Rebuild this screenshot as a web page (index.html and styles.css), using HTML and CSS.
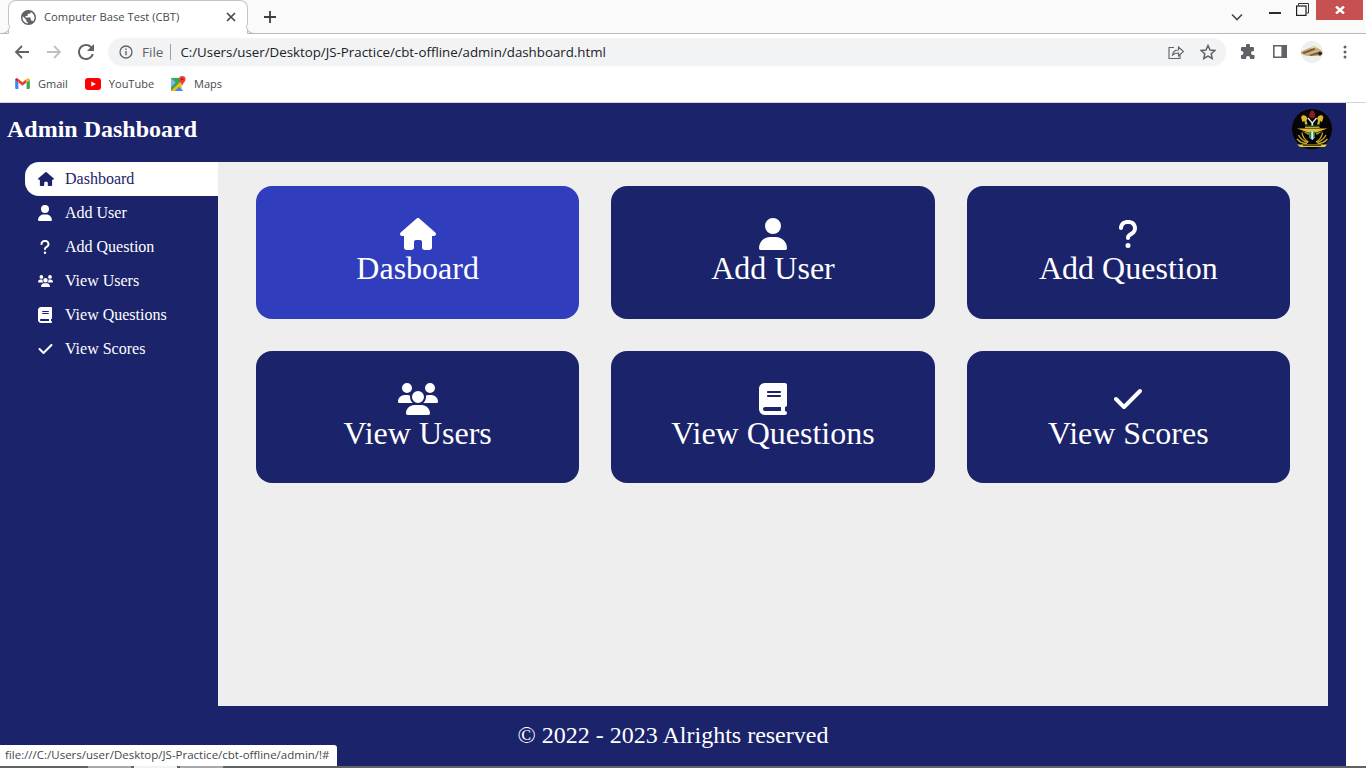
FILE: index.html
```html
<!DOCTYPE html>
<html lang="en">
<head>
<meta charset="utf-8">
<title>Computer Base Test (CBT)</title>
<link rel="stylesheet" href="styles.css">
</head>
<body>
<svg class="defs" aria-hidden="true">
  <symbol id="i-house" viewBox="0 0 576 512"><path d="M575.8 255.5c0 18-15 32.1-32 32.1h-32l.7 160.2c0 2.7-.2 5.4-.5 8.1V472c0 22.1-17.9 40-40 40H456c-1.1 0-2.2 0-3.3-.1c-1.4 .1-2.8 .1-4.2 .1H416 392c-22.1 0-40-17.9-40-40V448 384c0-17.7-14.3-32-32-32H256c-17.7 0-32 14.3-32 32v64 24c0 22.1-17.9 40-40 40H160 128.1c-1.5 0-3-.1-4.5-.2c-1.2 .1-2.4 .2-3.6 .2H104c-22.1 0-40-17.9-40-40V360c0-.9 0-1.9 .1-2.8V287.6H32c-18 0-32-14-32-32.1c0-9 3-17 10-24L266.4 8c7-7 15-8 22-8s15 2 21 7L564.8 231.5c8 7 12 15 11 24z"/></symbol>
  <symbol id="i-user" viewBox="0 0 448 512"><path d="M224 256A128 128 0 1 0 224 0a128 128 0 1 0 0 256zm-45.7 48C79.8 304 0 383.8 0 482.3C0 498.7 13.3 512 29.7 512H418.3c16.4 0 29.7-13.3 29.7-29.7C448 383.8 368.2 304 269.7 304H178.3z"/></symbol>
  <symbol id="i-question" viewBox="0 0 320 512"><path d="M80 160c0-35.3 28.7-64 64-64h32c35.3 0 64 28.7 64 64v3.6c0 21.8-11.1 42.1-29.4 53.8l-42.2 27.1c-25.2 16.2-40.4 44.1-40.4 74V320c0 17.7 14.3 32 32 32s32-14.3 32-32v-1.4c0-8.2 4.2-15.8 11-20.2l42.2-27.1c36.6-23.6 58.8-64.1 58.8-107.7V160c0-70.7-57.3-128-128-128H144C73.3 32 16 89.3 16 160c0 17.7 14.3 32 32 32s32-14.3 32-32zm80 320a40 40 0 1 0 0-80 40 40 0 1 0 0 80z"/></symbol>
  <symbol id="i-users" viewBox="0 0 640 512"><path d="M144 0a80 80 0 1 1 0 160A80 80 0 1 1 144 0zM512 0a80 80 0 1 1 0 160A80 80 0 1 1 512 0zM0 298.7C0 239.8 47.8 192 106.7 192h42.7c15.9 0 31 3.5 44.6 9.7c-1.3 7.2-1.9 14.7-1.9 22.3c0 38.2 16.8 72.5 43.3 96c-.2 0-.4 0-.7 0H21.3C9.6 320 0 310.4 0 298.7zM405.3 320c-.2 0-.4 0-.7 0c26.6-23.5 43.3-57.8 43.3-96c0-7.6-.7-15-1.9-22.3c13.6-6.3 28.7-9.7 44.6-9.7h42.7C592.2 192 640 239.8 640 298.7c0 11.8-9.6 21.3-21.3 21.3H405.3zM224 224a96 96 0 1 1 192 0 96 96 0 1 1 -192 0zM128 485.3C128 411.7 187.7 352 261.3 352H378.7C452.3 352 512 411.7 512 485.3c0 14.7-11.9 26.7-26.7 26.7H154.7c-14.7 0-26.7-11.9-26.7-26.7z"/></symbol>
  <symbol id="i-book" viewBox="0 0 448 512"><path d="M96 0C43 0 0 43 0 96V416c0 53 43 96 96 96H384h32c17.7 0 32-14.3 32-32s-14.3-32-32-32V384c17.7 0 32-14.3 32-32V32c0-17.7-14.3-32-32-32H384 96zm0 384H352v64H96c-17.7 0-32-14.3-32-32s14.3-32 32-32zm32-240c0-8.8 7.2-16 16-16H336c8.8 0 16 7.2 16 16s-7.2 16-16 16H144c-8.8 0-16-7.2-16-16zm16 48H336c8.8 0 16 7.2 16 16s-7.2 16-16 16H144c-8.8 0-16-7.2-16-16s7.2-16 16-16z"/></symbol>
  <symbol id="i-check" viewBox="0 0 448 512"><path d="M438.6 105.4c12.5 12.5 12.5 32.8 0 45.3l-256 256c-12.5 12.5-32.8 12.5-45.3 0l-128-128c-12.5-12.5-12.5-32.8 0-45.3s32.8-12.5 45.3 0L160 338.7 393.4 105.4c12.5-12.5 32.8-12.5 45.3 0z"/></symbol>
</svg>

<div class="chrome">
  <div class="tabstrip">
    <div class="tab">
      <svg class="tab-globe" viewBox="2 2 20 20"><path fill="#5f6368" d="M12 2C6.48 2 2 6.48 2 12s4.48 10 10 10 10-4.48 10-10S17.52 2 12 2zm-1 17.93c-3.95-.49-7-3.85-7-7.93 0-.62.08-1.21.21-1.79L9 15v1c0 1.1.9 2 2 2v1.93zm6.9-2.54c-.26-.81-1-1.39-1.9-1.39h-1v-3c0-.55-.45-1-1-1H8v-2h2c.55 0 1-.45 1-1V7h2c1.1 0 2-.9 2-2v-.41c2.93 1.19 5 4.06 5 7.41 0 2.08-.8 3.97-2.1 5.39z"/></svg>
      <span class="tab-title">Computer Base Test (CBT)</span>
      <svg class="tab-close" viewBox="0 0 10 10"><path d="M1 1l8 8M9 1l-8 8" stroke="#45494d" stroke-width="1.7"/></svg>
    </div>
    <svg class="new-tab" viewBox="0 0 12 12"><path d="M6 0v12M0 6h12" stroke="#3c4043" stroke-width="1.8"/></svg>
    <div class="win-controls">
      <svg class="tab-search" viewBox="0 0 12 8"><path d="M1 1.5l5 5 5-5" fill="none" stroke="#45494d" stroke-width="1.6"/></svg>
      <span class="win-min"></span>
      <svg class="win-max" viewBox="0 0 13 13"><path d="M2.5 2.5V.5h10V10H10.5" fill="none" stroke="#333" stroke-width="1"/><rect x=".6" y="3" width="9.4" height="9.4" fill="#fafafa" stroke="#1f1f1f" stroke-width="1.2"/></svg>
      <div class="win-close"><svg viewBox="0 0 10 8"><path d="M1 .5l8 7M9 .5l-8 7" stroke="#fff" stroke-width="2.4"/></svg></div>
    </div>
  </div>

  <div class="toolbar">
    <svg class="nav-ic" viewBox="0 0 16 16"><path d="M15 8H2.5M8 2L2 8l6 6" fill="none" stroke="#5f6368" stroke-width="1.8"/></svg>
    <svg class="nav-ic" viewBox="0 0 16 16"><path d="M1 8h12.5M8 2l6 6-6 6" fill="none" stroke="#bdc1c6" stroke-width="1.8"/></svg>
    <svg class="nav-ic" viewBox="4 4 16 16"><path fill="#5f6368" d="M17.65 6.35A7.958 7.958 0 0 0 12 4c-4.42 0-7.99 3.58-7.99 8s3.57 8 7.99 8c3.73 0 6.84-2.55 7.73-6h-2.08A5.99 5.99 0 0 1 12 18c-3.31 0-6-2.69-6-6s2.69-6 6-6c1.66 0 3.14.69 4.22 1.78L13 11h7V4l-2.35 2.35z"/></svg>
    <div class="omnibox">
      <svg class="info-ic" viewBox="0 0 14 14"><circle cx="7" cy="7" r="6" fill="none" stroke="#5f6368" stroke-width="1.3"/><path d="M7 6v4.2M7 3.5v1.500" stroke="#5f6368" stroke-width="1.4"/></svg>
      <span class="scheme">File</span>
      <span class="omni-sep"></span>
      <span class="url">C:/Users/user/Desktop/JS-Practice/cbt-offline/admin/dashboard.html</span>
      <svg class="share-ic" viewBox="0 0 16 16"><path d="M6 3.5H1v11h11V10" fill="none" stroke="#5f6368" stroke-width="1.1"/><path d="M4.5 11C5 7.5 7.5 6 10.5 6V3l5 4.5-5 4.500V9C8 9 6 9.500 4.500 11z" fill="#f1f3f4" stroke="#5f6368" stroke-width="1.1"/></svg>
      <svg class="star-ic" viewBox="0 0 16 16"><path d="M8 1.5l2 4.5 4.800.5-3.600 3.200 1 4.800L8 12.100l-4.200 2.400 1-4.800L1.200 6.500 6 6z" fill="none" stroke="#5f6368" stroke-width="1.5"/></svg>
    </div>
    <svg class="ext-ic" viewBox="0 0 16 16"><path d="M6 1.500a2 2 0 0 1 4 0V3h3a1 1 0 0 1 1 1v3h-1a2 2 0 0 0 0 4h1.500v3a1 1 0 0 1-1 1H10v-1a2 2 0 0 0-4 0v1H2a1 1 0 0 1-1-1v-3h.5a2 2 0 0 0 0-4H1V4a1 1 0 0 1 1-1h4z" fill="#5f6368"/></svg>
    <svg class="panel-ic" viewBox="0 0 14 13"><path fill-rule="evenodd" d="M0 0h14v13H0zM1.600 1.600v9.800h6.800V1.600z" fill="#5f6368"/></svg>
    <svg class="avatar" viewBox="0 0 22 22"><circle cx="11" cy="11" r="11" fill="#edf0ee"/><path d="M0 10.500L13 5l7 4 2 3.500-3 2.500H6L0 13z" fill="#cdb07a"/><path d="M1 11.500L13 7l1.500 1.500L3 13zM8 14l9-3 1 2-8 2z" fill="#6f5b3e"/><path d="M10 6.500l4-1.500 1 1-4 1.500z" fill="#eadcb8"/><circle cx="19" cy="12.500" r="2" fill="#26282b"/></svg>
    <svg class="menu-ic" viewBox="0 0 4 14"><circle cx="2" cy="2" r="1.500" fill="#5f6368"/><circle cx="2" cy="7" r="1.500" fill="#5f6368"/><circle cx="2" cy="12" r="1.500" fill="#5f6368"/></svg>
  </div>

  <div class="bookmarks">
    <a class="bm" href="#"><svg class="bm-ic bm-gmail" viewBox="0 0 16 12"><path d="M0 2v9a1 1 0 0 0 1 1h2.500V5z" fill="#4285f4"/><path d="M16 2v9a1 1 0 0 1-1 1h-2.500V5z" fill="#34a853"/><path d="M3.500 5V1L8 4.500 12.500 1v4L8 8.500z" fill="#ea4335"/><path d="M0 2c0-1.700 2-2.500 3.500-1v4z" fill="#c5221f"/><path d="M16 2c0-1.700-2-2.500-3.500-1v4z" fill="#fbbc04"/></svg>Gmail</a>
    <a class="bm" href="#"><svg class="bm-ic bm-yt" viewBox="0 0 16 12"><rect width="16" height="12" rx="3" fill="#f00"/><path d="M6.300 3.400v5.200L10.800 6z" fill="#fff"/></svg>YouTube</a>
    <a class="bm" href="#"><svg class="bm-ic bm-maps" viewBox="0 0 16 16"><path d="M0 2h11v14H0z" fill="#34a853"/><path d="M0 16L11 5v11z" fill="#fbbc04"/><path d="M4 16l4.500-4.500L13 16z" fill="#4285f4"/><path d="M0 2l5 5-5 5z" fill="#8ab4f8"/><path d="M12 0a3.500 3.500 0 0 1 3.500 3.500C15.500 6 13 7.500 12 10 11 7.500 8.500 6 8.500 3.500A3.500 3.500 0 0 1 12 0z" fill="#ea4335"/><circle cx="12" cy="3.500" r="1.200" fill="#a50e0e"/></svg>Maps</a>
  </div>
</div>

<div class="app">
  <div class="page">
    <header class="topbar">
      <h1 class="brand">Admin Dashboard</h1>
      <svg class="crest" viewBox="0 0 40 40">
        <circle cx="20" cy="20" r="20" fill="#050505"/>
        <path d="M17.500 8c-.8-2.500.5-6 2.700-7 2.300 1 3.500 4.500 2.600 7l-2.600 1.500z" fill="#8f1d1d"/>
        <path d="M9 8l2-2 3 1 1.500 2.500-1 2 1 4H13l-.5-3.500-2 1z" fill="#d8b62e"/>
        <path d="M31.500 8l-2-2-3 1-1.500 2.500 1 2-1 4h2.500l.5-3.500 2 1z" fill="#d8b62e"/>
        <path d="M16.500 8.500l3.800 4.500 3.800-4.500.9.900-3.800 4.600v3.500h-1.800V14l-3.800-4.600z" fill="#ececec"/>
        <path d="M13 16.500h14.500v2H13z" fill="#27613a"/>
        <path d="M13 18h14.500v1H13z" fill="#c9a72b"/>
        <path d="M5 19.500h30.500L24 23.500h-7.500z" fill="#e2bf35"/>
        <path d="M10 22l7 2-.5 2zM31 22l-7 2 .5 2z" fill="#b7992f"/>
        <path d="M17.500 22.500h5.500v6l-2.750 2.500-2.750-2.500z" fill="#f1f1f1"/>
        <path d="M17.500 22.500h1.800v7.300l-1.800-1.300zM21.200 22.500H23v6l-1.800 1.300z" fill="#1a8a4a"/>
        <g fill="none" stroke="#c8a82c" stroke-width="1.300">
          <path d="M16.500 33C13 31 10.500 28 10 23.500"/>
          <path d="M16 33.500C12 32.500 8.500 30 6.500 26"/>
          <path d="M15 34.500C11 34.500 7.500 33 5 30"/>
          <path d="M24 33c3.500-2 6-5 6.500-9.500"/>
          <path d="M24.500 33.500c4-1 7.500-3.500 9.500-7.500"/>
          <path d="M25.500 34.500c4 0 7.500-1.500 10-4.500"/>
        </g>
        <path d="M5 35.500h30l-2 2.500H8z" fill="#e6c63f"/>
        <path d="M11 35.800h18v1.200H11z" fill="#4a3d10"/>
      </svg>
    </header>
    <div class="body-row">
      <nav class="sidebar">
        <a class="side-link active" href="#"><span class="side-ic"><svg class="ic-s-house"><use href="#i-house"/></svg></span>Dashboard</a>
        <a class="side-link" href="#"><span class="side-ic"><svg class="ic-s-user"><use href="#i-user"/></svg></span>Add User</a>
        <a class="side-link" href="#"><span class="side-ic"><svg class="ic-s-question"><use href="#i-question"/></svg></span>Add Question</a>
        <a class="side-link" href="#"><span class="side-ic"><svg class="ic-s-users"><use href="#i-users"/></svg></span>View Users</a>
        <a class="side-link" href="#"><span class="side-ic"><svg class="ic-s-book"><use href="#i-book"/></svg></span>View Questions</a>
        <a class="side-link" href="#"><span class="side-ic"><svg class="ic-s-check"><use href="#i-check"/></svg></span>View Scores</a>
      </nav>
      <main class="content">
        <div class="grid">
          <a class="card hover" href="#"><svg class="ic-l-house"><use href="#i-house"/></svg><span class="card-label">Dasboard</span></a>
          <a class="card" href="#"><svg class="ic-l-user"><use href="#i-user"/></svg><span class="card-label">Add User</span></a>
          <a class="card" href="#"><svg class="ic-l-question"><use href="#i-question"/></svg><span class="card-label">Add Question</span></a>
          <a class="card" href="#"><svg class="ic-l-users"><use href="#i-users"/></svg><span class="card-label">View Users</span></a>
          <a class="card" href="#"><svg class="ic-l-book"><use href="#i-book"/></svg><span class="card-label">View Questions</span></a>
          <a class="card" href="#"><svg class="ic-l-check"><use href="#i-check"/></svg><span class="card-label">View Scores</span></a>
        </div>
      </main>
    </div>
    <footer class="footer">© 2022 - 2023 Alrights reserved</footer>
  </div>
  <div class="os-strip"><span class="os-item"></span><span class="os-item os-item-on"></span><span class="os-item"></span></div>
  <div class="status-bubble">file:///C:/Users/user/Desktop/JS-Practice/cbt-offline/admin/!#</div>
</div>
</body>
</html>
```
FILE: styles.css
```css
* { box-sizing: border-box; }
html, body { margin: 0; height: 100%; }
body { width: 1366px; height: 768px; overflow: hidden; background: #fff; font-family: "Liberation Serif", "Times New Roman", serif; }
a { color: inherit; text-decoration: none; }
svg { display: block; flex: none; fill: currentColor; }
.defs { width: 0; height: 0; position: absolute; }

/* browser chrome */
.chrome { height: 103px; font-family: "Open Sans", "Noto Sans", sans-serif; color: #45494d; border-bottom: 1px solid #d5d5d5; }
.tabstrip { height: 34px; background: #fafafa; border-bottom: 1px solid #b9b9b9; display: flex; position: relative; }
.tab { width: 240px; height: 34px; margin-left: 8px; background: #fff; border: 1px solid #c4c4c4; border-bottom: 0; border-radius: 8px 8px 0 0; display: flex; align-items: center; padding: 0 7px 1px 12px; position: relative; }
.tab::before, .tab::after { content: ""; position: absolute; bottom: 0; width: 8px; height: 8px; border-bottom: 1px solid #b9b9b9; }
.tab::before { left: -8px; border-right: 1px solid #c4c4c4; border-bottom-right-radius: 8px; background: #fafafa; }
.tab::after { right: -8px; border-left: 1px solid #c4c4c4; border-bottom-left-radius: 8px; background: #fafafa; }
.tab-globe { width: 15px; height: 15px; }
.tab-title { font-size: 11.2px; margin: 0 0 2px 8px; flex: 1; white-space: nowrap; }
.tab-close { width: 10px; height: 10px; margin-right: 4px; }
.new-tab { width: 12px; height: 12px; margin: 11px 0 0 16px; }
.win-controls { margin-left: auto; display: flex; align-items: flex-start; }
.tab-search { width: 12px; height: 8px; margin: 13px 26px 0 0; }
.win-min { width: 12px; height: 2px; background: #2b2b2b; margin: 12px 15px 0 0; }
.win-max { width: 13px; height: 13px; margin: 3px 7px 0 0; }
.win-close { width: 47px; height: 20px; background: #c75050; display: flex; align-items: center; justify-content: center; margin-right: 3px; }
.win-close svg { width: 10px; height: 8px; }

.toolbar { height: 35px; background: #fff; display: flex; align-items: center; padding: 0 13px 0 14px; }
.nav-ic { width: 16px; height: 16px; margin-right: 16px; }
.omnibox { width: 1118px; height: 28px; margin-left: -2px; margin-right: 14px; background: #f1f3f4; border-radius: 14px; display: flex; align-items: center; padding: 0 10px 0 11px; }
.info-ic { width: 14px; height: 14px; }
.scheme { font-size: 13.5px; color: #5f6368; margin-left: 9px; }
.omni-sep { width: 1px; height: 16px; background: #9aa0a6; margin: 0 9px 0 7px; }
.url { font-size: 13.3px; color: #202124; flex: 1; white-space: nowrap; padding-top: 1px; }
.share-ic { width: 16px; height: 16px; margin-right: 16px; }
.star-ic { width: 16px; height: 16px; }
.ext-ic { width: 16px; height: 16px; margin-right: 17px; }
.panel-ic { width: 14px; height: 13px; margin-right: 14px; }
.avatar { width: 22px; height: 22px; margin-right: 20px; }
.menu-ic { width: 4px; height: 14px; }

.bookmarks { height: 33px; background: #fff; display: flex; align-items: center; padding: 0 0 4px 15px; gap: 17px; }
.bm { display: flex; align-items: center; font-size: 11px; color: #45494d; }
.bm-ic { margin-right: 8px; }
.bm-gmail { width: 15px; height: 11px; }
.bm-yt { width: 16px; height: 12px; }
.bm-maps { width: 15px; height: 15px; }

/* page */
.app { height: 665px; position: relative; overflow: hidden; background: #fff; display: flex; flex-direction: column; }
.page { width: 1346px; flex: 1; min-height: 0; background: #1b236b; color: #fff; display: flex; flex-direction: column; }
.topbar { height: 59px; flex: none; display: flex; align-items: flex-start; justify-content: space-between; padding: 6px 14px 0 7px; }
.brand { margin: 7px 0 0; font-size: 24px; font-weight: 700; line-height: 27px; color: #fff; }
.crest { width: 40px; height: 40px; }
.body-row { flex: 1; display: flex; padding-right: 18px; min-height: 0; }
.sidebar { width: 218px; flex: none; padding-left: 25px; display: flex; flex-direction: column; }
.side-link { height: 34px; display: flex; align-items: center; font-size: 16px; color: #fff; white-space: nowrap; border-radius: 14px 0 0 14px; }
.side-link.active { background: #fff; color: #1b236b; }
.side-ic { width: 40px; flex: none; padding-left: 13px; }
.ic-s-house { width: 16px; height: 14px; }
.ic-s-user { width: 14px; height: 16px; }
.ic-s-question { width: 10px; height: 16px; margin-left: 2px; }
.ic-s-users { width: 15px; height: 12px; }
.ic-s-book { width: 14px; height: 16px; }
.ic-s-check { width: 15px; height: 16px; }
.content { flex: 1; background: #eee; padding: 24px 38px; }
.grid { display: grid; grid-template-columns: repeat(3, 1fr); gap: 32px; }
.card { background: #1b236b; color: #fff; border-radius: 16px; padding: 32px 16px; display: flex; flex-direction: column; align-items: center; }
.card.hover { background: #303dbc; }
.card-label { font-size: 32px; line-height: 36.5px; white-space: nowrap; }
.ic-l-house { width: 36px; height: 32px; }
.ic-l-user { width: 28px; height: 32px; }
.ic-l-question { width: 20px; height: 32px; }
.ic-l-users { width: 40px; height: 32px; }
.ic-l-book { width: 28px; height: 32px; }
.ic-l-check { width: 28px; height: 32px; }
.footer { height: 60px; flex: none; display: flex; align-items: center; justify-content: center; font-size: 24px; padding-bottom: 1px; }
.os-strip { height: 2px; flex: none; background: #636363; display: flex; gap: 3px; padding-left: 88px; }
.os-item { width: 43px; background: #a9a9a9; }
.os-item-on { background: #f2f2f2; }
.status-bubble { position: absolute; left: 0; bottom: 2px; width: 337px; height: 21px; background: #fff; border-top-right-radius: 3px; font-family: "Open Sans", "Noto Sans", sans-serif; font-size: 11.5px; line-height: 20px; color: #45494d; padding-left: 5px; white-space: nowrap; }
```
